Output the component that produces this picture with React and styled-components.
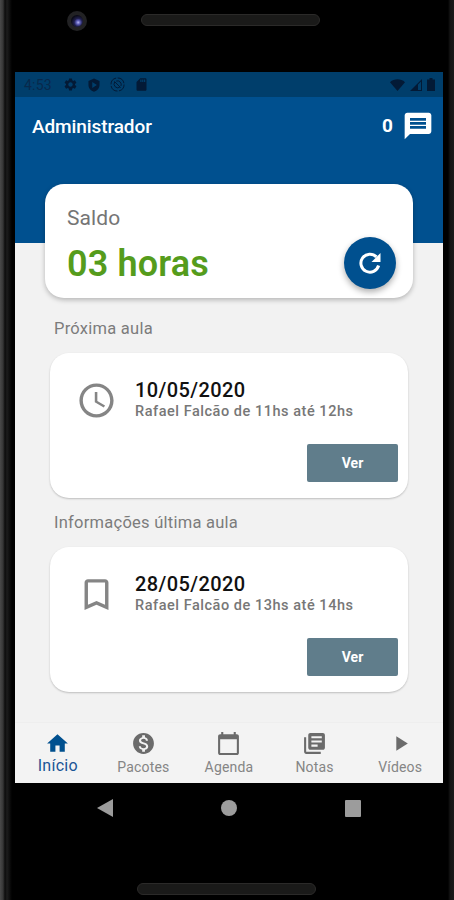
import styled, { createGlobalStyle } from 'styled-components';
import {
  MdSettings,
  MdSdCard,
  MdMessage,
  MdAccessTime,
  MdBookmarkBorder,
  MdHome,
  MdMonetizationOn,
  MdCalendarToday,
  MdLibraryBooks,
  MdPlayArrow,
} from 'react-icons/md';

const GlobalStyle = createGlobalStyle`
  * {
    box-sizing: border-box;
  }
  body {
    margin: 0;
    background: #000;
    font-family: Roboto, "Liberation Sans", sans-serif;
  }
`

const Phone = styled.div`
  width: 454px;
  height: 900px;
  padding: 0 11px 0 15px;
  display: flex;
  flex-direction: column;
  overflow: hidden;
  background: linear-gradient(90deg, #4a4a4a 0, #363636 3px, #0c0c0c 5px, #1c1c1c 7px, #000 12px, #000 448px, #141414 450px, #1a1a1a 454px);
`

const TopBezel = styled.div`
  height: 72px;
  flex: none;
  padding: 11px 0 0 52px;
  display: flex;
  align-items: flex-start;
`

const Camera = styled.div`
  width: 20px;
  height: 20px;
  border-radius: 50%;
  border: 4px solid #222224;
  background: radial-gradient(circle at 60% 62%, #b4b4f4 0, #5a5ab4 2px, #20204e 4px, #0b0b18 7px);
`

const Speaker = styled.div`
  width: ${props => props.width};
  height: 12px;
  margin: ${props => props.margin};
  border-radius: 6px;
  border: 1px solid #2b2a29;
  background: #1a1a19;
`

const Screen = styled.div`
  height: 711px;
  flex: none;
  display: flex;
  flex-direction: column;
  width: 428px;
  background: #f2f2f2;
`

const StatusBar = styled.div`
  height: 25px;
  flex: none;
  display: flex;
  align-items: center;
  padding: 0 8px 0 9px;
  background: #003e6b;
  color: #031a36;
`

const Clock = styled.div`
  width: 39px;
  font-size: 14px;
  letter-spacing: 0.2px;
  color: #08294b;
`

const StatusIcons = styled.div`
  display: flex;
  align-items: center;
  gap: ${props => props.gap};
  margin-left: ${props => props.push ? 'auto' : '0'};
`

const Header = styled.div`
  height: 146px;
  flex: none;
  display: flex;
  justify-content: space-between;
  padding: 15px 9px 0 17px;
  background: #00508f;
  color: #fff;
`

const Title = styled.div`
  font-size: 19px;
  font-weight: 500;
  line-height: 30px;
  letter-spacing: -0.1px;
`

const Messages = styled.div`
  height: 27px;
  display: flex;
  align-items: center;
  gap: 9px;
  font-size: 19px;
  font-weight: 700;
`

const Content = styled.div`
  flex: 1;
  display: flex;
  flex-direction: column;
  margin-top: -59px;
  padding: 0 30px;
`

const BalanceCard = styled.div`
  height: 114px;
  flex: none;
  display: flex;
  justify-content: space-between;
  align-items: flex-end;
  padding: 0 17px 9px 22px;
  border-radius: 19px;
  background: #fff;
  box-shadow: 0 2px 5px rgba(0, 0, 0, 0.25);
`

const BalanceLabel = styled.div`
  font-size: 21px;
  line-height: 24px;
  letter-spacing: 0.1px;
  color: #757575;
`

const BalanceValue = styled.div`
  margin-top: 12px;
  font-size: 36px;
  font-weight: 600;
  line-height: 44px;
  letter-spacing: 0.15px;
  padding-bottom: 3px;
  color: #559c1c;
`

const RefreshButton = styled.button`
  width: 52px;
  height: 52px;
  display: flex;
  align-items: center;
  justify-content: center;
  border: none;
  border-radius: 50%;
  background: #00508f;
  color: #fff;
  box-shadow: 0 3px 6px rgba(0, 0, 0, 0.32);
`

const SectionTitle = styled.div`
  height: 20px;
  flex: none;
  margin: ${props => props.margin};
  font-size: 16.5px;
  line-height: 20px;
  letter-spacing: 0.25px;
  color: #7c7c7c;
`

const LessonCard = styled.div`
  height: 145px;
  flex: none;
  display: flex;
  flex-direction: column;
  justify-content: space-between;
  margin: 0 5px;
  padding: 25px 10px 16px 26px;
  border-radius: 19px;
  background: #fff;
  box-shadow: 0 1px 2px rgba(0, 0, 0, 0.22);
`

const LessonRow = styled.div`
  display: flex;
  align-items: center;
  gap: 18px;
  color: #858585;
`

const LessonDate = styled.div`
  font-size: 20px;
  font-weight: 500;
  line-height: 24px;
  letter-spacing: 0.4px;
  color: #111;
`

const LessonInfo = styled.div`
  font-size: 14.5px;
  font-weight: 500;
  line-height: 20px;
  letter-spacing: 0.53px;
  color: #777;
`

const ViewButton = styled.button`
  width: 91px;
  height: 38px;
  align-self: flex-end;
  border: none;
  border-radius: 2px;
  background: #607d8b;
  color: #fff;
  font-family: inherit;
  font-size: 14px;
  font-weight: 700;
`

const TabBar = styled.div`
  height: 61px;
  flex: none;
  display: grid;
  grid-template-columns: repeat(5, 1fr);
  border-top: 1px solid #eeeeee;
  background: #f3f3f3;
`

const Tab = styled.div`
  display: flex;
  flex-direction: column;
  align-items: center;
  padding-top: 8px;
  font-size: ${props => props.active ? '16px' : '14px'};
  line-height: ${props => props.active ? '20px' : '22px'};
  letter-spacing: ${props => props.active ? '0.3px' : '0.2px'};
  color: ${props => props.active ? '#1a5596' : '#858585'};
  svg {
    color: ${props => props.active ? '#00508f' : '#6b6b6b'};
  }
`

const NavBar = styled.div`
  height: 50px;
  flex: none;
  display: flex;
  align-items: center;
  justify-content: space-between;
  padding: 0 82px 0 82px;
`

const BottomBezel = styled.div`
  flex: 1;
  padding-top: 50px;
`

const ShieldIcon = () => (
  <svg width="14" height="14" viewBox="0 0 24 24" fill="currentColor" fillRule="evenodd">
    <path d="M12 1L2.500 5v6.500C2.500 17.500 6.500 22 12 23.500c5.500-1.500 9.500-6 9.500-12V5zM9 7v10l8-5z" />
  </svg>
)

const SyncOffIcon = () => (
  <svg width="15" height="15" viewBox="0 0 24 24" fill="none" stroke="currentColor" strokeWidth="1.600">
    <circle cx="12" cy="12" r="10.500" strokeDasharray="14 2.500" />
    <path d="M7.500 8a6 6 0 0 0 8 8.500M10 6.500a6 6 0 0 1 7.500 8M7 7l10 10" />
  </svg>
)

const WifiIcon = () => (
  <svg width="15" height="12" viewBox="0 0 15 12" fill="currentColor">
    <path d="M7.500 12L0 3.200C4.200-.6 10.800-.6 15 3.200z" />
  </svg>
)

const SignalIcon = () => (
  <svg width="12" height="12" viewBox="0 0 12 12" fill="currentColor">
    <path d="M0 12L12 0v12zM8 5.500V11h3V2.500z" fillRule="evenodd" />
  </svg>
)

const BatteryIcon = () => (
  <svg width="8" height="13" viewBox="0 0 8 13" fill="currentColor">
    <path d="M2.500 0h3v1.500H8V13H0V1.500h2.500z" />
  </svg>
)

const RefreshIcon = () => (
  <svg width="22" height="22" viewBox="0 0 22 22" fill="none" stroke="currentColor" strokeWidth="3">
    <path d="M19.600 13.500A9 9 0 1 1 17.400 4.900" />
    <path d="M21.500 1v9h-9z" fill="currentColor" stroke="none" />
  </svg>
)

const lessons = [
  {
    section: 'Próxima aula',
    margin: '21px 0 14px 9px',
    icon: MdAccessTime,
    date: '10/05/2020',
    info: 'Rafael Falcão de 11hs até 12hs',
  },
  {
    section: 'Informações última aula',
    margin: '15px 0 14px 9px',
    icon: MdBookmarkBorder,
    date: '28/05/2020',
    info: 'Rafael Falcão de 13hs até 14hs',
  },
]

const tabs = [
  { label: 'Início', icon: MdHome },
  { label: 'Pacotes', icon: MdMonetizationOn },
  { label: 'Agenda', icon: MdCalendarToday },
  { label: 'Notas', icon: MdLibraryBooks },
  { label: 'Vídeos', icon: MdPlayArrow },
]

const App = () => {
  return (
    <Phone>
      <GlobalStyle />
      <TopBezel>
        <Camera />
        <Speaker width='179px' margin='3px 0 0 54px' />
      </TopBezel>
      <Screen>
        <StatusBar>
          <Clock>4:53</Clock>
          <StatusIcons gap='9px'>
            <MdSettings size={15} />
            <ShieldIcon />
            <SyncOffIcon />
            <MdSdCard size={15} />
          </StatusIcons>
          <StatusIcons gap='5px' push>
            <WifiIcon />
            <SignalIcon />
            <BatteryIcon />
          </StatusIcons>
        </StatusBar>
        <Header>
          <Title>Administrador</Title>
          <Messages>
            0
            <MdMessage size={32} />
          </Messages>
        </Header>
        <Content>
          <BalanceCard>
            <div>
              <BalanceLabel>Saldo</BalanceLabel>
              <BalanceValue>03 horas</BalanceValue>
            </div>
            <RefreshButton>
              <RefreshIcon />
            </RefreshButton>
          </BalanceCard>
          {lessons.map(({ section, margin, icon: Icon, date, info }) => (
            <div key={date}>
              <SectionTitle margin={margin}>{section}</SectionTitle>
              <LessonCard>
                <LessonRow>
                  <Icon size={41} />
                  <div>
                    <LessonDate>{date}</LessonDate>
                    <LessonInfo>{info}</LessonInfo>
                  </div>
                </LessonRow>
                <ViewButton>Ver</ViewButton>
              </LessonCard>
            </div>
          ))}
        </Content>
        <TabBar>
          {tabs.map(({ label, icon: Icon }, i) => (
            <Tab key={label} active={i === 0 ? 1 : 0}>
              <Icon size={25} />
              {label}
            </Tab>
          ))}
        </TabBar>
      </Screen>
      <NavBar>
        <svg width="16" height="18" viewBox="0 0 16 18" fill="#9c9c9c"><path d="M0 9L16 0v18z" /></svg>
        <svg width="16" height="16" viewBox="0 0 16 16" fill="#9c9c9c"><circle cx="8" cy="8" r="8" /></svg>
        <svg width="16" height="17" viewBox="0 0 16 17" fill="#9c9c9c"><rect width="16" height="17" rx="1" /></svg>
      </NavBar>
      <BottomBezel>
        <Speaker width='179px' margin='0 0 0 122px' />
      </BottomBezel>
    </Phone>
  );
};

export default App;
